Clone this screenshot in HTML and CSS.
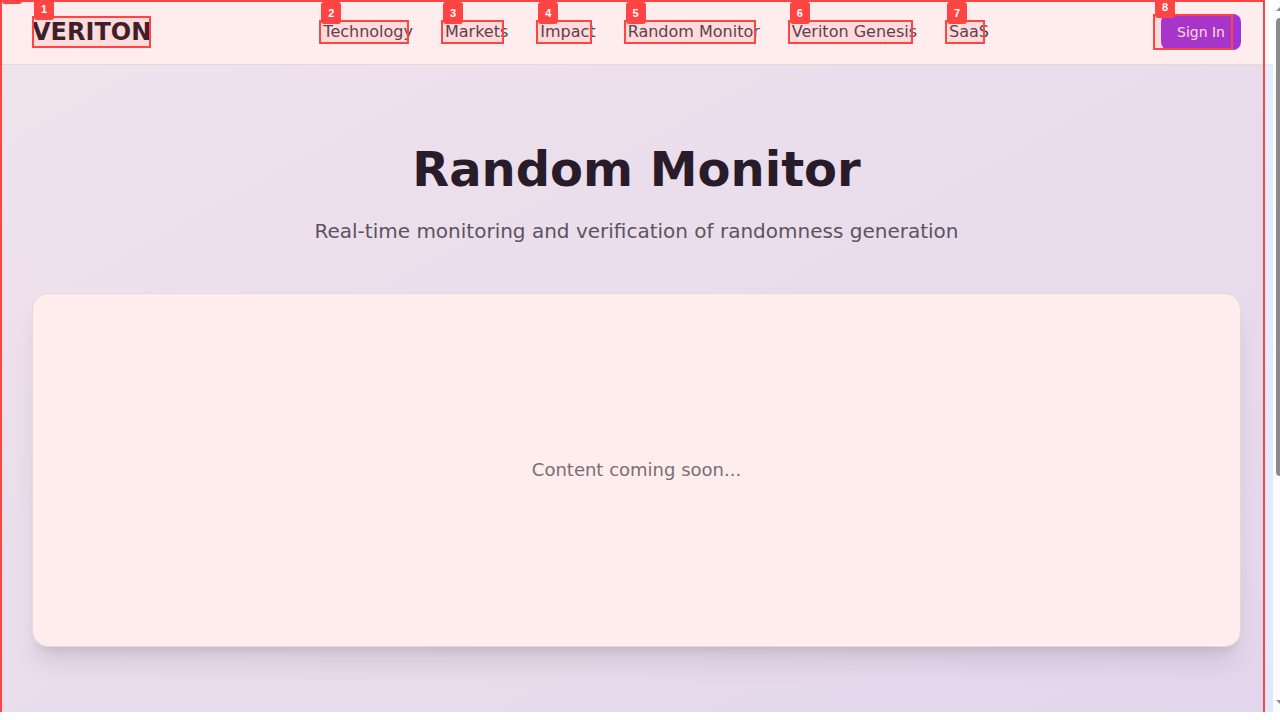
FILE: index.html
```html
<!DOCTYPE html>
<html lang="en">
<head>
<meta charset="utf-8">
<title>Random Monitor - Veriton</title>
<link rel="stylesheet" href="styles.css">
</head>
<body>
<div class="frame">
  <div class="page">
    <header class="header">
      <a class="brand mark" href="#">VERITON<span class="tag">1</span></a>
      <nav class="nav">
        <a class="mark" href="#">Technology<span class="tag">2</span></a>
        <a class="mark" href="#">Markets<span class="tag">3</span></a>
        <a class="mark" href="#">Impact<span class="tag">4</span></a>
        <a class="mark" href="#">Random Monitor<span class="tag">5</span></a>
        <a class="mark" href="#">Veriton Genesis<span class="tag">6</span></a>
        <a class="mark" href="#">SaaS<span class="tag">7</span></a>
      </nav>
      <button class="signin mark" type="button">Sign In<span class="tag">8</span></button>
    </header>
    <main class="main">
      <h1>Random Monitor</h1>
      <p class="subtitle">Real-time monitoring and verification of randomness generation</p>
      <section class="card"><p>Content coming soon...</p></section>
    </main>
    <div class="outline"><span class="outline-tag"></span></div>
  </div>
  <div class="scrollbar" aria-hidden="true">
    <svg class="arrow" viewBox="0 0 10 5"><path d="M0 5 5 0l5 5z"/></svg>
    <div class="thumb"></div>
    <svg class="arrow" viewBox="0 0 10 5"><path d="M0 0l5 5 5-5z"/></svg>
  </div>
</div>
</body>
</html>
```
FILE: styles.css
```css
* { box-sizing: border-box; }
body {
  margin: 0;
  background: #fff;
  font-family: "DejaVu Sans", sans-serif;
  color: #111827;
}
h1, p { margin: 0; }
a { color: inherit; text-decoration: none; }
.frame {
  display: flex;
  height: calc(100vh - 8px);
  overflow: hidden;
}
.page {
  position: relative;
  flex: 1;
  min-width: 0;
  background: linear-gradient(to bottom right, #eff6ff, #e0e7ff);
}
.header {
  display: flex;
  justify-content: space-between;
  align-items: center;
  height: 65px;
  padding: 0 32px;
  background: #fff;
  border-bottom: 1px solid #e5e7eb;
}
.brand {
  font-size: 24px;
  line-height: 32px;
  font-weight: 700;
}
.nav {
  display: flex;
  gap: 32px;
  font-size: 16px;
  line-height: 24px;
  color: #374151;
}
.signin {
  height: 36px;
  padding: 0 16px;
  border: 0;
  border-radius: 8px;
  background: #9333ea;
  color: #fff;
  font: 14px/20px "DejaVu Sans", sans-serif;
}
.mark { position: relative; }
.mark::after {
  content: "";
  position: absolute;
  inset: 0;
  border: 2px solid #ff4444;
  background: rgba(255, 68, 68, 0.1);
}
.nav .mark::after { left: -4px; right: 4px; }
.signin.mark::after { left: -8px; right: 8px; }
.tag {
  position: absolute;
  z-index: 3;
  top: -18px;
  left: -2px;
  width: 20px;
  height: 22px;
  border-radius: 3px;
  background: #ff4444;
  color: #fff;
  font: 700 11px/22px "Liberation Sans", sans-serif;
  text-align: center;
}
.brand .tag { left: 2px; }
.signin .tag { left: -6px; }
.main {
  padding: 72px 32px;
  text-align: center;
}
h1 {
  font-size: 48px;
  line-height: 64px;
}
.subtitle {
  margin-top: 16px;
  font-size: 20px;
  line-height: 28px;
  color: #4b5563;
}
.card {
  display: grid;
  place-items: center;
  min-height: 354px;
  margin-top: 48px;
  border: 1px solid #e5e7eb;
  border-radius: 16px;
  background: #fff;
  box-shadow: 0 20px 25px -5px rgba(0, 0, 0, 0.1), 0 8px 10px -6px rgba(0, 0, 0, 0.1);
  font-size: 18px;
  line-height: 28px;
  color: #6b7280;
}
.outline {
  position: absolute;
  z-index: 2;
  inset: 0 8px 0 0;
  border: 2px solid #ff4444;
  border-bottom: 0;
  background: rgba(255, 68, 68, 0.1);
  pointer-events: none;
}
.outline-tag {
  position: absolute;
  top: -2px;
  left: 0;
  width: 20px;
  height: 4px;
  border-radius: 0 0 3px 3px;
  background: #ff4444;
}
.scrollbar {
  display: flex;
  flex-direction: column;
  width: 7px;
  padding: 6px 0 7px 3px;
  overflow: hidden;
  background: #fcfcfc;
}
.arrow {
  flex: none;
  width: 10px;
  height: 5px;
  fill: #8b8b8b;
}
.thumb {
  width: 8px;
  height: 65.5%;
  margin: 7px 0 auto;
  border-radius: 4px;
  background: #8b8b8b;
}
```
